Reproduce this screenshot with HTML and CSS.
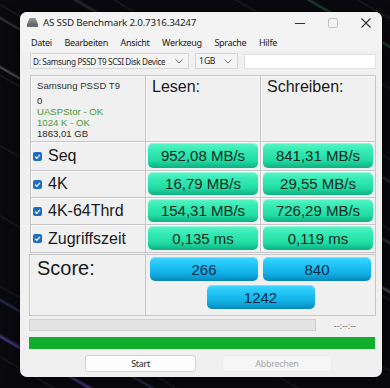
FILE: index.html
```html
<!DOCTYPE html>
<html lang="de">
<head>
<meta charset="utf-8">
<title>AS SSD Benchmark</title>
<link rel="stylesheet" href="styles.css">
</head>
<body>
<div class="window">
  <div class="titlebar">
    <svg class="appicon" width="11" height="9" viewBox="0 0 11 9">
      <defs><linearGradient id="hd" x1="0" y1="0" x2="0" y2="1"><stop offset="0" stop-color="#9a9a9a"/><stop offset="1" stop-color="#555"/></linearGradient></defs>
      <polygon points="2.5,0 8.5,0 11,6.5 11,9 0,9 0,6.5" fill="url(#hd)"/>
      <rect x="0" y="6.5" width="11" height="2.5" fill="#6a6a6a"/>
    </svg>
    <span class="title">AS SSD Benchmark 2.0.7316.34247</span>
    <div class="controls">
      <span class="ctl"><svg width="10" height="10" viewBox="0 0 10 10"><line x1="0" y1="5.5" x2="10" y2="5.5" stroke="#333" stroke-width="1"/></svg></span>
      <span class="ctl"><svg width="10" height="10" viewBox="0 0 10 10"><rect x="0.5" y="0.5" width="9" height="9" rx="1.5" fill="none" stroke="#c4c4c4" stroke-width="1"/></svg></span>
      <span class="ctl"><svg width="10" height="10" viewBox="0 0 10 10"><path d="M0.5 0.5 L9.5 9.5 M9.5 0.5 L0.5 9.5" stroke="#333" stroke-width="1.1"/></svg></span>
    </div>
  </div>
  <div class="menubar">
    <span>Datei</span><span>Bearbeiten</span><span>Ansicht</span><span>Werkzeug</span><span>Sprache</span><span>Hilfe</span>
  </div>
  <div class="toolbar">
    <div class="combo drive"><span class="ctext">D: Samsung PSSD T9 SCSI Disk Device</span><svg class="chev" width="8" height="5" viewBox="0 0 8 5"><path d="M0.5 0.5 L4 4 L7.5 0.5" fill="none" stroke="#777" stroke-width="1"/></svg></div>
    <div class="combo size"><span class="ctext">1 GB</span><svg class="chev" width="8" height="5" viewBox="0 0 8 5"><path d="M0.5 0.5 L4 4 L7.5 0.5" fill="none" stroke="#777" stroke-width="1"/></svg></div>
    <div class="textbox"></div>
  </div>
  <div class="results">
    <div class="cell info">
      <div class="devname">Samsung PSSD T9</div>
      <div>0</div>
      <div class="ok">UASPStor - OK</div>
      <div class="ok">1024 K - OK</div>
      <div>1863,01 GB</div>
    </div>
    <div class="cell head">Lesen:</div>
    <div class="cell head">Schreiben:</div>

    <div class="cell label"><span class="check"><svg width="9" height="9" viewBox="0 0 9 9"><path d="M2 4.6 L3.8 6.3 L7 2.8" fill="none" stroke="#fff" stroke-width="1.2"/></svg></span>Seq</div>
    <div class="cell vcell"><div class="val">952,08 MB/s</div></div>
    <div class="cell vcell"><div class="val">841,31 MB/s</div></div>

    <div class="cell label"><span class="check"><svg width="9" height="9" viewBox="0 0 9 9"><path d="M2 4.6 L3.8 6.3 L7 2.8" fill="none" stroke="#fff" stroke-width="1.2"/></svg></span>4K</div>
    <div class="cell vcell"><div class="val">16,79 MB/s</div></div>
    <div class="cell vcell"><div class="val">29,55 MB/s</div></div>

    <div class="cell label"><span class="check"><svg width="9" height="9" viewBox="0 0 9 9"><path d="M2 4.6 L3.8 6.3 L7 2.8" fill="none" stroke="#fff" stroke-width="1.2"/></svg></span>4K-64Thrd</div>
    <div class="cell vcell"><div class="val">154,31 MB/s</div></div>
    <div class="cell vcell"><div class="val">726,29 MB/s</div></div>

    <div class="cell label"><span class="check"><svg width="9" height="9" viewBox="0 0 9 9"><path d="M2 4.6 L3.8 6.3 L7 2.8" fill="none" stroke="#fff" stroke-width="1.2"/></svg></span>Zugriffszeit</div>
    <div class="cell vcell"><div class="val">0,135 ms</div></div>
    <div class="cell vcell"><div class="val">0,119 ms</div></div>
  </div>
  <div class="score">
    <div class="score-label">Score:</div>
    <div class="score-vals">
      <div class="sbox">266</div>
      <div class="sbox">840</div>
      <div class="sbox">1242</div>
    </div>
  </div>
  <div class="progress-row">
    <div class="progress"></div>
    <span class="time">--:--:--</span>
  </div>
  <div class="greenbar"></div>
  <div class="buttons">
    <div class="btn">Start</div>
    <div class="btn disabled">Abbrechen</div>
  </div>
</div>
</body>
</html>
```

FILE: styles.css
```css
html, body {
  margin: 0;
  padding: 0;
}
body {
  width: 390px;
  height: 388px;
  overflow: hidden;
  background-color: #0a0a0e;
  background-image:
    linear-gradient(30deg, transparent 0 8%, rgba(120,90,220,0.55) 8.4%, transparent 9% 100%),
    linear-gradient(30deg, transparent 0 14%, rgba(90,110,200,0.35) 14.3%, transparent 14.8% 100%),
    linear-gradient(30deg, transparent 0 52%, rgba(200,200,210,0.35) 52.3%, transparent 52.8% 100%),
    linear-gradient(30deg, transparent 0 60%, rgba(170,170,180,0.25) 60.3%, transparent 60.8% 100%),
    linear-gradient(30deg, transparent 0 70%, rgba(150,150,160,0.22) 70.3%, transparent 70.9% 100%),
    linear-gradient(30deg, transparent 0 92%, rgba(80,200,140,0.3) 92.3%, transparent 92.8% 100%),
    repeating-linear-gradient(30deg, #0a0a0e 0 26px, #15151b 26px 28px, #0a0a0e 28px 61px);
  font-family: "Noto Sans", "Open Sans", sans-serif;
}

.window {
  margin: 12px 0 0 20px;
  width: 362px;
  height: 365px;
  background: #f0f0f0;
  border-radius: 7px;
  box-shadow: 0 0 0 1px rgba(0,0,0,0.25), 0 4px 14px rgba(0,0,0,0.5);
  overflow: hidden;
  box-sizing: border-box;
}

/* title bar */
.titlebar {
  height: 21px;
  display: flex;
  align-items: center;
  padding-left: 7px;
  background: #f3f3f3;
}
.appicon {
  margin-right: 5px;
  flex: none;
}
.title {
  font-size: 9.8px;
  color: #1f1f1f;
  letter-spacing: -0.2px;
  white-space: nowrap;
}
.controls {
  margin-left: auto;
  display: flex;
  height: 100%;
}
.ctl {
  width: 33px;
  display: flex;
  align-items: center;
  justify-content: center;
}

/* menu */
.menubar {
  height: 18px;
  display: flex;
  align-items: center;
  padding-left: 11px;
  gap: 12.6px;
  font-size: 9px;
  letter-spacing: -0.3px;
  color: #1a1a1a;
  background: #f3f3f3;
  white-space: nowrap;
}

/* toolbar */
.toolbar {
  display: flex;
  gap: 6px;
  margin: 2px 0 0 10px;
  height: 16px;
}
.combo {
  box-sizing: border-box;
  height: 16px;
  border: 1px solid #d6d6d6;
  background: #f4f4f4;
  display: flex;
  align-items: center;
  padding: 0 5px 0 2px;
  font-size: 8.2px;
  color: #1e1e1e;
  letter-spacing: -0.35px;
  white-space: nowrap;
  overflow: hidden;
}
.ctext {
  overflow: hidden;
}
.combo .chev {
  margin-left: auto;
  flex: none;
}
.drive {
  width: 159px;
}
.size {
  width: 43px;
  padding-left: 3px;
  font-size: 8.6px;
  word-spacing: -1.5px;
}
.textbox {
  box-sizing: border-box;
  width: 132px;
  height: 15px;
  margin-top: 1px;
  background: #fff;
  border: 1px solid #e2e2e2;
}

/* results grid */
.results {
  margin: 6px 0 0 10px;
  width: 346px;
  box-sizing: border-box;
  display: grid;
  grid-template-columns: 114px 114px 114px;
  grid-template-rows: 65px 28px 26px 26px 27px;
  gap: 1px;
  border: 1px solid #c6c6c6;
  background: #c6c6c6;
}
.cell {
  background: #f0f0f0;
  box-shadow: inset 1px 1px 0 #fafafa;
}
.info {
  padding: 4px 0 0 6px;
  font-family: "Liberation Sans", Arial, sans-serif;
  font-size: 9.6px;
  line-height: 11px;
  color: #2a2a2a;
}
.devname {
  margin-bottom: 4px;
  color: #333;
}
.ok {
  color: #4d9a35;
}
.head {
  font-family: "Liberation Sans", Arial, sans-serif;
  font-size: 16px;
  color: #1a1a1a;
  padding: 2px 0 0 6px;
}
.label {
  display: flex;
  align-items: center;
  padding-left: 2px;
  font-family: "Liberation Sans", Arial, sans-serif;
  font-size: 16px;
  color: #1a1a1a;
}
.check {
  width: 9px;
  height: 9px;
  border-radius: 2px;
  background: #1f6dc2;
  margin-right: 6px;
  display: flex;
}
.vcell {
  padding: 1px 2px 2px 2px;
  display: flex;
}
.val {
  flex: 1;
  border-radius: 5px;
  background: linear-gradient(to bottom, #5af5c8 0%, #36ebb4 30%, #22dca4 70%, #17c692 85%, #10b082 100%);
  box-shadow: inset 0 1px 0 rgba(255,255,255,0.35);
  display: flex;
  align-items: center;
  justify-content: center;
  font-family: "Liberation Sans", Arial, sans-serif;
  font-size: 15px;
  color: #17291f;
}

/* score */
.score {
  margin: 1px 0 0 9px;
  width: 347px;
  height: 62px;
  box-sizing: border-box;
  display: grid;
  grid-template-columns: 115px 1fr;
  gap: 1px;
  border: 1px solid #c6c6c6;
  background: #c6c6c6;
}
.score-label {
  background: #f0f0f0;
  font-family: "Liberation Sans", Arial, sans-serif;
  font-size: 20px;
  color: #1a1a1a;
  padding: 2px 0 0 7px;
}
.score-vals {
  background: #f0f0f0;
  display: flex;
  flex-wrap: wrap;
  justify-content: center;
  align-content: flex-start;
  gap: 4px 5px;
  padding-top: 2px;
}
.sbox {
  width: 108px;
  height: 24px;
  border-radius: 5px;
  background: linear-gradient(to bottom, #3fd6ff 0%, #20c4f6 35%, #10aee4 70%, #0a98cc 88%, #0886b8 100%);
  box-shadow: inset 0 1px 0 rgba(255,255,255,0.3);
  display: flex;
  align-items: center;
  justify-content: center;
  font-family: "Liberation Sans", Arial, sans-serif;
  font-size: 15px;
  color: #0c2a4a;
}

/* progress */
.progress-row {
  display: flex;
  align-items: center;
  margin: 3px 0 0 9px;
  height: 12px;
}
.progress {
  width: 287px;
  height: 12px;
  box-sizing: border-box;
  border: 1px solid #cfcfcf;
  background: #e3e3e3;
}
.time {
  margin-left: 18px;
  font-size: 8px;
  color: #555;
  letter-spacing: 0.3px;
}
.greenbar {
  margin: 6px 0 0 9px;
  width: 346px;
  height: 12px;
  background: #10ae2c;
}

/* buttons */
.buttons {
  display: flex;
  gap: 26px;
  margin: 6px 0 0 65px;
}
.btn {
  box-sizing: border-box;
  width: 111px;
  height: 17px;
  border: 1px solid #d2d2d2;
  border-radius: 3px;
  background: #fdfdfd;
  display: flex;
  align-items: center;
  justify-content: center;
  font-size: 9px;
  color: #1e1e1e;
  letter-spacing: -0.3px;
}
.btn.disabled {
  width: 110px;
  border-color: #ececec;
  background: #f6f6f6;
  color: #a8a8a8;
}
```
